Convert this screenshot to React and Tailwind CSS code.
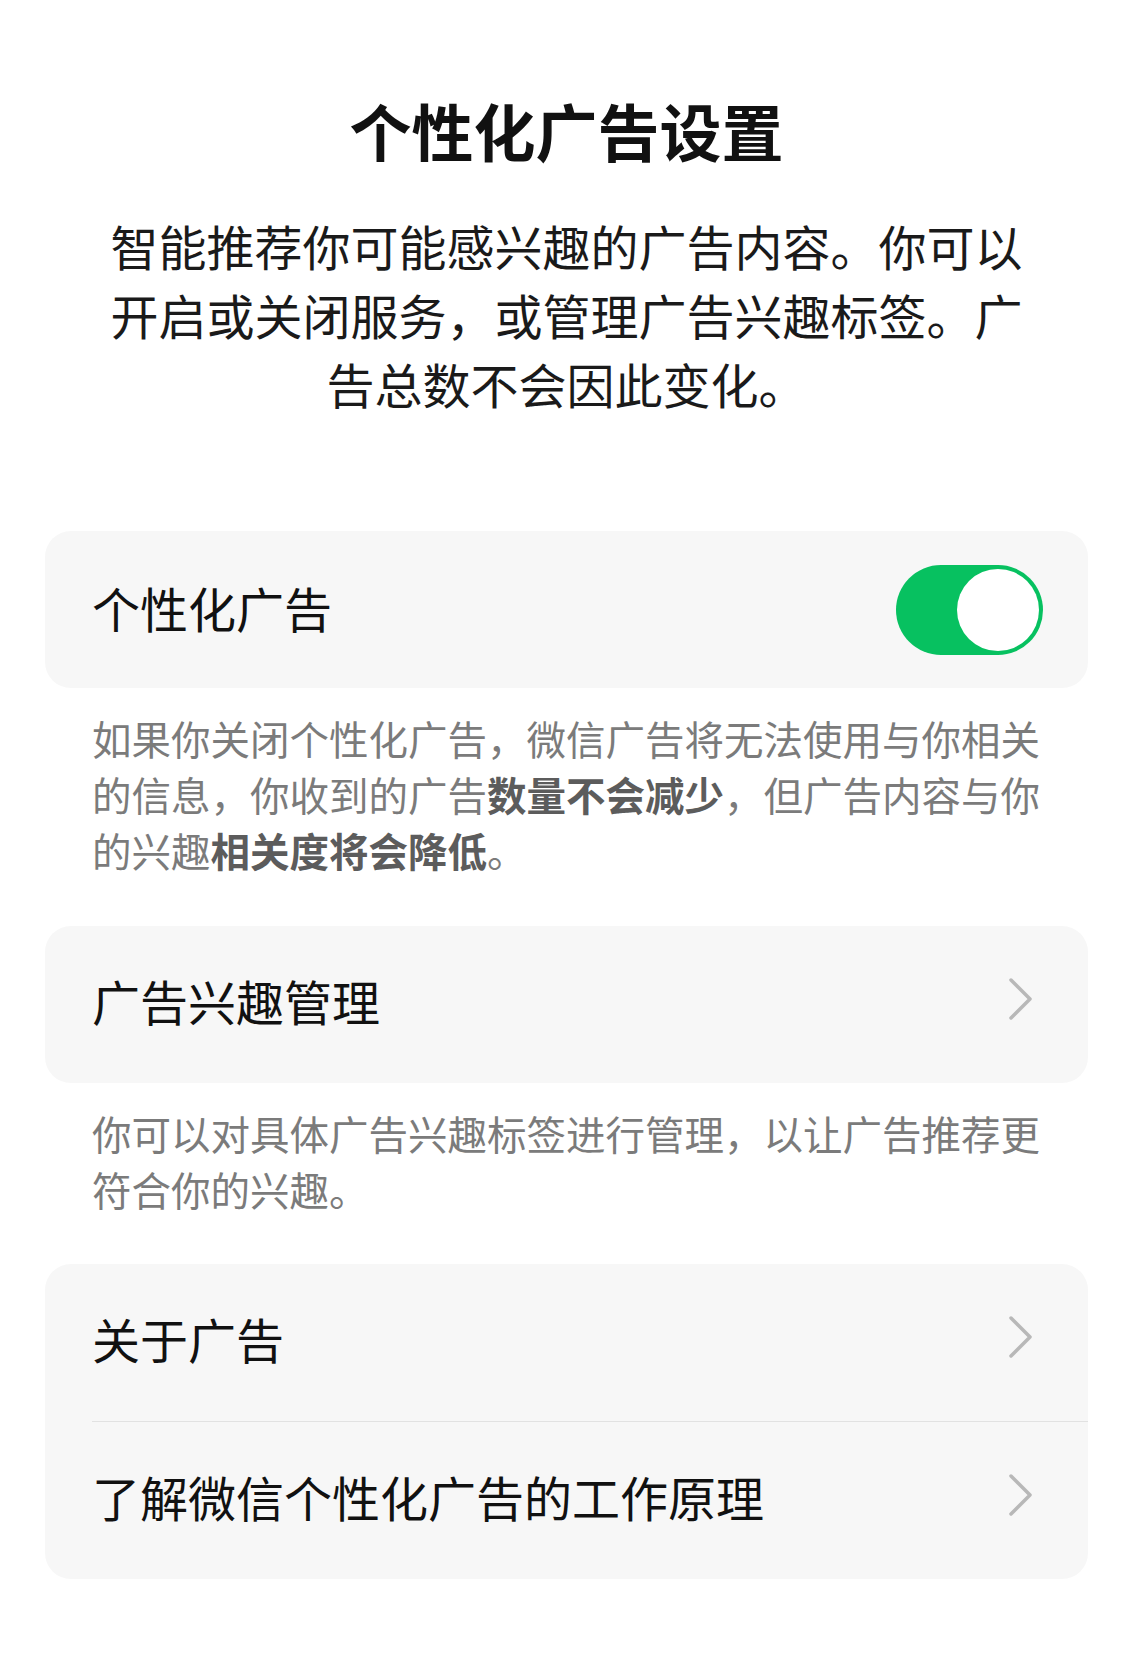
import React, { useState } from 'react';

const Chevron = () => (
    <svg width="26" height="44" viewBox="0 0 26 44" fill="none" className="shrink-0 mb-[12px]">
        <path d="M3 3 L22 22 L3 41" stroke="#b8b8b8" strokeWidth="3.5" strokeLinecap="round" strokeLinejoin="round" />
    </svg>
);

const Row = ({ label }) => (
    <div className="h-[157px] flex items-center justify-between pl-[47px] pr-[54px]">
        <span className="mb-[9px] text-[48px] leading-[64px] text-[#111111]">{label}</span>
        <Chevron />
    </div>
);

const App = () => {
    const [enabled, setEnabled] = useState(true);

    return (
        <div
            className="min-h-[1665px] bg-white"
            style={{ fontFamily: '"Noto Sans CJK SC", "Noto Sans", sans-serif' }}
        >
            {/* Header */}
            <h1 className="pt-[90px] text-center text-[62px] leading-[80px] font-bold text-[#111111]">
                个性化广告设置
            </h1>
            <p className="mt-[41px] mx-auto w-[930px] text-center text-[48px] leading-[69px] text-[#1a1a1a]">
                智能推荐你可能感兴趣的广告内容。你可以开启或关闭服务，或管理广告兴趣标签。广告总数不会因此变化。
            </p>

            <div className="px-[45px] mt-[113px]">
                {/* Toggle card */}
                <div className="h-[157px] rounded-[26px] bg-[#f7f7f7] flex items-center justify-between pl-[47px] pr-[45px]">
                    <span className="mb-[6px] text-[48px] leading-[64px] text-[#111111]">个性化广告</span>
                    <button
                        type="button"
                        onClick={() => setEnabled(!enabled)}
                        className={`w-[147px] h-[90px] rounded-full p-[4px] flex items-center ${enabled ? 'bg-[#07c160] justify-end' : 'bg-[#e5e5e5] justify-start'}`}
                    >
                        <span className="block w-[82px] h-[82px] rounded-full bg-white" />
                    </button>
                </div>
                <p className="mt-[22px] pl-[47px] pr-[20px] text-[39.5px] leading-[56px] text-[#7b7b7b]">
                    如果你关闭个性化广告，微信广告将无法使用与你相关的信息，你收到的广告<b className="font-semibold text-[#5c5c5c]">数量不会减少</b>，但广告内容与你的兴趣<b className="font-semibold text-[#5c5c5c]">相关度将会降低</b>。
                </p>

                {/* Interest management */}
                <div className="mt-[48px] rounded-[26px] bg-[#f7f7f7]">
                    <Row label="广告兴趣管理" />
                </div>
                <p className="mt-[22px] pl-[47px] pr-[20px] text-[39.5px] leading-[56px] text-[#7b7b7b]">
                    你可以对具体广告兴趣标签进行管理，以让广告推荐更符合你的兴趣。
                </p>

                {/* About */}
                <div className="mt-[47px] rounded-[26px] bg-[#f7f7f7] overflow-hidden">
                    <Row label="关于广告" />
                    <div className="ml-[47px] h-px bg-[#e2e2e2]" />
                    <Row label="了解微信个性化广告的工作原理" />
                </div>
            </div>
        </div>
    );
};

export default App;
